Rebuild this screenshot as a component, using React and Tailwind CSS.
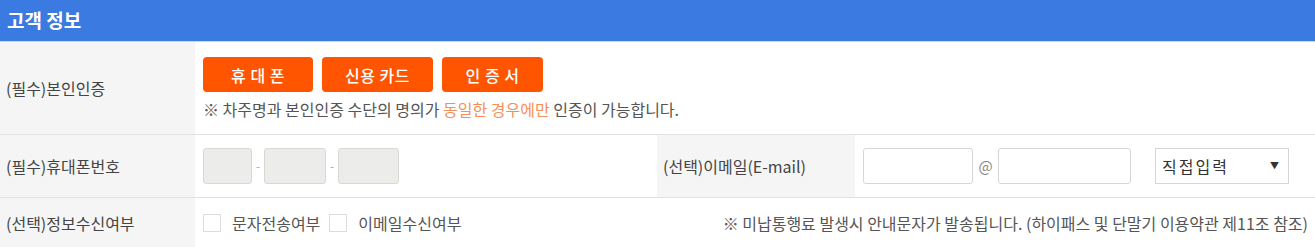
const font = { fontFamily: '"Noto Sans CJK KR", "Noto Sans", sans-serif' };

const Label = ({ children, className = '' }) => (
    <div className={`flex items-center bg-[#f5f5f5] pl-[6px] text-[16px] text-[#444] ${className}`}>
        {children}
    </div>
);

const OrangeButton = ({ children, width }) => (
    <button className={`h-[35px] ${width} rounded-[4px] bg-[#ff5500] text-[16px] font-medium tracking-[0.5px] text-white`}>
        {children}
    </button>
);

const Box = () => (
    <span className="inline-block h-[18px] w-[18px] border border-[#dcdcdc] bg-white" />
);

export default function App() {
    return (
        <div className="w-[1315px] bg-white" style={font}>
            <div className="flex h-[42px] items-center border-b border-[#c6d8f5] bg-[#3b7ae0] pl-[7px] text-[19px] font-bold text-white">
                고객 정보
            </div>

            <div className="flex h-[93px] border-b border-[#e2e2e2]">
                <Label className="w-[195px]">(필수)본인인증</Label>
                <div className="flex flex-col justify-center pl-[8px] pt-[2px]">
                    <div className="flex gap-[9px]">
                        <OrangeButton width="w-[110px]">휴 대 폰</OrangeButton>
                        <OrangeButton width="w-[111px]">신용 카드</OrangeButton>
                        <OrangeButton width="w-[101px]">인 증 서</OrangeButton>
                    </div>
                    <p className="mt-[5px] text-[16px] text-[#555]">
                        ※ 차주명과 본인인증 수단의 명의가 <span className="text-[#f58f55]">동일한 경우에만</span> 인증이 가능합니다.
                    </p>
                </div>
            </div>

            <div className="flex h-[63px] border-b border-[#e2e2e2]">
                <Label className="w-[195px]">(필수)휴대폰번호</Label>
                <div className="flex w-[462px] items-center pl-[8px] text-[12px] text-[#aaa]">
                    <span className="h-[36px] w-[49px] rounded-[3px] border border-[#d8d8d4] bg-[#ececea]" />
                    <span className="w-[12px] text-center">-</span>
                    <span className="h-[36px] w-[62px] rounded-[3px] border border-[#d8d8d4] bg-[#ececea]" />
                    <span className="w-[12px] text-center">-</span>
                    <span className="h-[36px] w-[61px] rounded-[3px] border border-[#d8d8d4] bg-[#ececea]" />
                </div>
                <Label className="w-[198px] text-[15px]">(선택)이메일(E-mail)</Label>
                <div className="flex items-center pl-[8px]">
                    <span className="h-[36px] w-[110px] rounded-[3px] border border-[#d6d6d6] bg-white" />
                    <span className="w-[25px] text-center text-[15px] text-[#888]">@</span>
                    <span className="h-[36px] w-[133px] rounded-[3px] border border-[#d6d6d6] bg-white" />
                    <div className="ml-[24px] flex h-[36px] w-[134px] items-center justify-between border border-[#d6d6d6] pl-[6px] pr-[9px] text-[16px] text-[#333]">
                        <span className="tracking-[2px]">직접입력</span>
                        <span className="text-[9px]">▼</span>
                    </div>
                </div>
            </div>

            <div className="flex h-[49px]">
                <Label className="w-[195px]">(선택)정보수신여부</Label>
                <div className="flex flex-1 items-center pl-[8px] pr-[7px] text-[16px] text-[#555]">
                    <Box />
                    <span className="ml-[11px] mr-[9px]">문자전송여부</span>
                    <Box />
                    <span className="ml-[11px]">이메일수신여부</span>
                    <span className="ml-auto">※ 미납통행료 발생시 안내문자가 발송됩니다. (하이패스 및 단말기 이용약관 제11조 참조)</span>
                </div>
            </div>
        </div>
    );
}
